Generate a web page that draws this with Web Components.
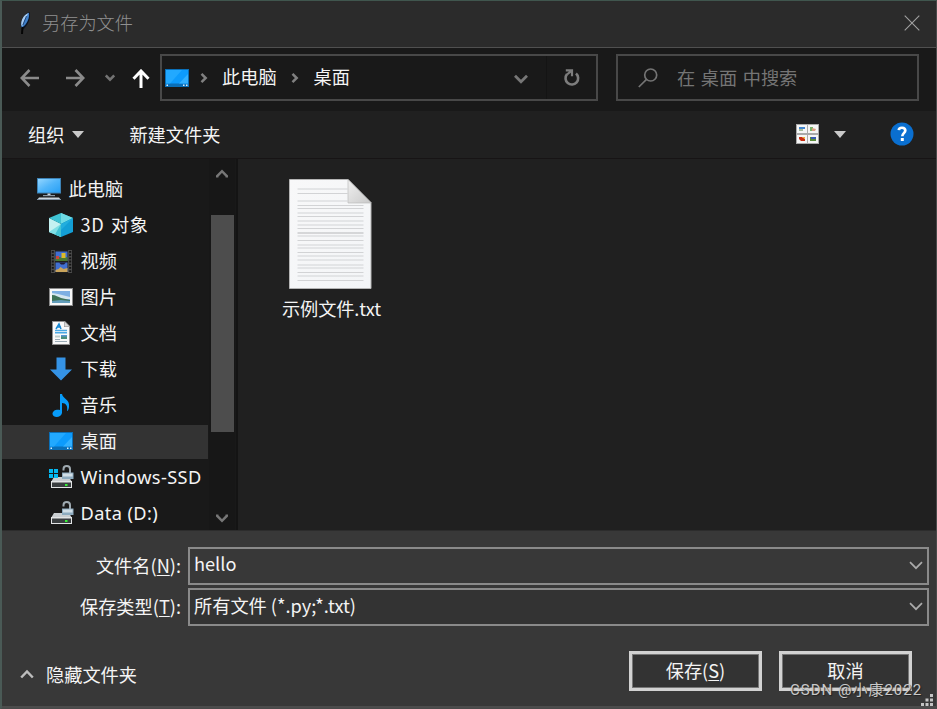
<!DOCTYPE html>
<html lang="zh-CN">
<head>
<meta charset="utf-8">
<title>另存为文件</title>
<style>
html,body{margin:0;padding:0}
body{width:937px;height:709px;overflow:hidden;background:#383838;color:#f4f4f4;font:18.2px/24px "Noto Sans CJK SC",sans-serif}
</style>
</head>
<body>
<save-dialog></save-dialog>
<script>
const DRIVE = `<path d="M14.500 5.500V4c0-4 6.500-4 6.500 0v4" fill="none" stroke="#9faab1" stroke-width="2"/><path d="M5 12h15l3 5v6H2v-6z" fill="#c9ced1"/><path d="M2 16h21v7H2z" fill="#e2e4e5"/><path d="M3 17.500h19v4.500H3z" fill="#3a3e40"/><path d="M16 19h2.500v2H16z" fill="#35ef36"/><path d="M13 7.500h11.500V14H13z" fill="#8eacc0"/><path d="M14 8.500h9.500v3H14z" fill="#d2dfe7"/>`;
const ICONS = {
feather:[14,24,`<path d="M4.300 19C1.500 13 4 4 11.500 1c1.500 5-1 13.500-7.200 18z" fill="#0b1422"/><path d="M3.500 17C2.500 10 5.500 4 11 1.800c.8 5-2 12-7.500 15.200z" fill="#3f7fc9"/><path d="M3.300 14C3 9 5.500 4 10.500 2L6.500 9 4.200 15.500z" fill="#a9cdf3"/><path d="M8.500 5L4.800 14" stroke="#12325e" stroke-width=".8"/><path d="M4.500 16L4 23" stroke="#050505" stroke-width="2"/>`],
close:[16,16,`<path d="M.7.7l14.600 14.600M15.300.7L.7 15.300" stroke="#a0a0a0" stroke-width="1.100"/>`],
back:[20,18,`<path d="M19 9H2M9.500 1L1.800 9l7.700 8" fill="none" stroke="#8b8b8b" stroke-width="2.600"/>`],
forward:[20,18,`<path d="M1 9h17M10.500 1l7.700 8-7.700 8" fill="none" stroke="#8b8b8b" stroke-width="2.600"/>`],
small:[10,8,`<path d="M.8 1.500L5 5.700l4.200-4.200" fill="none" stroke="#737373" stroke-width="2.500"/>`],
up:[18,20,`<path d="M9 19V3M1.500 9.700L9 2l7.500 7.700" fill="none" stroke="#fff" stroke-width="3"/>`],
crumb:[8,12,`<path d="M1.500 1.800L5.700 6l-4.200 4.200" fill="none" stroke="#808080" stroke-width="2.500"/>`],
chev:[14,10,`<path d="M1 1.800l6 6 6-6" fill="none" stroke="#777" stroke-width="2.800"/>`],
refresh:[17,19,`<path d="M13 5.500A6.300 6.300 0 1 1 4 6.200" fill="none" stroke="#7d7d7d" stroke-width="2.600"/><path d="M2.800 2.400H9V8.300M9 2.400L4 6.500" fill="none" stroke="#7d7d7d" stroke-width="2.200"/>`],
search:[20,20,`<circle cx="12.700" cy="7" r="6" fill="none" stroke="#747474" stroke-width="1.700"/><path d="M8.500 11.300L.8 19" stroke="#747474" stroke-width="1.700"/>`],
caret:[12,7,`<path d="M0 0h12L6 7z" fill="#c9c9c9"/>`],
views:[23,20,`<path d="M0 0h23v20H0z" fill="#aaa"/><path d="M1 1h10v8H1zM12 1h10v8H12zM1 11h10v8H1zM12 11h10v8H12z" fill="#f6f6f6"/><path d="M3 3h6v2H3z" fill="#4386cf"/><path d="M3 5h4v2H3z" fill="#a5bc9b"/><path d="M14 3h3v4h-3z" fill="#79b46a"/><path d="M16 4l4 1-1 2h-3z" fill="#db9d81"/><path d="M3 13h3l3 2v2H5l-2-2z" fill="#c92e13"/><path d="M6 13h3v2z" fill="#e7b331"/><path d="M14 13h6v4h-6z" fill="#5b8d3c"/><path d="M15 13h5v2h-5z" fill="#3a5cae"/>`],
help:[24,24,`<circle cx="12" cy="12" r="11.500" fill="#0a6fd0"/><path d="M8.800 8.200C9 4.800 15.300 4.900 15.300 8.600c0 2.400-3 2.700-3 5.600" fill="none" stroke="#fff" stroke-width="2.700"/><path d="M10.800 16h3v3h-3z" fill="#fff"/>`],
desktop:[24,18,`<path d="M0 0h24v18H0z" fill="#0a6fb8"/><path d="M1 1h22v13.500H1z" fill="#0d9bfc"/><path d="M1 1h16L5 14.500H1z" fill="#22a9ff"/><path d="M14 14.500L23 5v9.500z" fill="#32b0ff"/><path d="M1.500 15.500h1.500v1.500H1.500zM18 15.500h1.500v1.500H18zM21 15.500h1.500v1.500H21z" fill="#d7f0ff"/>`],
pc:[24,22,`<defs><linearGradient id="g" x2="1" y2="1"><stop stop-color="#92d5ff"/><stop offset=".5" stop-color="#50b5fa"/><stop offset="1" stop-color="#28a0f5"/></linearGradient></defs><path d="M0 0h24v15.500H0z" fill="#3d82b5"/><path d="M1 1h22v13.500H1z" fill="url(#g)"/><path d="M10.500 15.500h3v2h-3z" fill="#ccd5dd"/><path d="M6 17h12v1.200H6z" fill="#8998a6"/><path d="M2 19.500h20l2 2.500H0z" fill="#cbd6df"/><path d="M0 21h24v1H0z" fill="#7f91a2"/>`],
cube:[24,24,`<path d="M0 5l12 6v13L0 19z" fill="#75dce3"/><path d="M0 5l12 6-3 9-9-1z" fill="#c4f1f1"/><path d="M12 11L0 19l12 5z" fill="#7fdfe5"/><path d="M12 11v13l-6-2.500z" fill="#42c3d4"/><path d="M0 5l12-5 12 5-12 6z" fill="#3fc3d4"/><path d="M12 0l12 5-12 6z" fill="#6fdbe5"/><path d="M24 5l-12 6v13l12-5z" fill="#139fd6"/><path d="M24 5L12 17v-6z" fill="#22aede"/>`],
video:[21,23,`<path d="M0 0h21v23H0z" fill="#4a4a4a"/><path d="M1.800 1v21M19.200 1v21" stroke="#151515" stroke-width="2" stroke-dasharray="1.800 1.400"/><path d="M4 0h13v23H4z" fill="#202020"/><path d="M4.500 1.500h12V11h-12zM4.500 12.500h12V22h-12z" fill="#416fd0"/><path d="M4.500 8l4-1 3 1 5-1v4h-12z" fill="#4c7a32"/><path d="M10.500 3h4v5h-4z" fill="#dcbb29"/><path d="M5 6h3v3H5z" fill="#cb4639"/><path d="M4.500 20l3-1 2-2 3 2 4-1v4h-12z" fill="#caa45b"/><path d="M8 12.500h7l-2 2h-3z" fill="#201b38"/>`],
picture:[24,18,`<path d="M0 0h24v18H0z" fill="#8a8a8a"/><path d="M1 1h22v16H1z" fill="#f8f8f8"/><path d="M3 3h18v12H3z" fill="#7eafe3"/><path d="M3 5l6 1 8 2 4 1v2H3z" fill="#d4e5f0"/><path d="M3 7c4 0 6 2 9 3s6 1 9 2v1H3z" fill="#3e7258"/><path d="M3 13l9-1 9 1v2H3z" fill="#629dbb"/>`],
doc:[18,24,`<path d="M0 0h13l5 5v19H0z" fill="#8f8f8f"/><path d="M1 1h11v5h5v17H1z" fill="#f9f9f9"/><path d="M12.500.5V5.500H17.500z" fill="#d8d8d8"/><path d="M4 8L7 3l2 5M5 6h4" fill="none" stroke="#1687d2" stroke-width="1.500"/><path d="M3 9.500h12M3 11.700h12" stroke="#4ba8e3" stroke-width="1.500"/><path d="M3 18.500h5M3 20.500h12" stroke="#9aabb5"/><path d="M3 14.500h5v2H3z" fill="#bcc"/><path d="M9 14h6v4H9z" fill="#4c8f7b"/><path d="M9 14h6v1.500H9z" fill="#5795d4"/>`],
download:[24,24,`<path d="M7.500.5h9v12H23L12 23.500 1 12.500h6.500z" fill="#3593e6"/>`],
music:[18,25,`<path d="M8 1h2c1 5 8 5 7 13-.2 2-1 4-2 4 1-5-1-8-5-8v10c-1 5-9 5-9.500 1C.5 17 5 16 8 17z" fill="#079cfa"/>`],
windrive:[25,24,DRIVE+`<path d="M0 4h4v4H0zM5 4h4v4H5zM0 9h4v4H0zM5 9h4v4H5z" fill="#04b9f2"/>`],
drive:[25,24,DRIVE],
sup:[12,10,`<path d="M1.200 8.500V7L6 2.200 10.800 7v1.500" fill="none" stroke="#777" stroke-width="2.500"/>`],
sdown:[12,10,`<path d="M1.200 1.500V3L6 7.800 10.800 3V1.500" fill="none" stroke="#777" stroke-width="2.500"/>`],
combo:[14,9,`<path d="M1 1.200l6 6 6-6" fill="none" stroke="#aaa" stroke-width="1.700"/>`],
hide:[14,10,`<path d="M1.200 8.500l5.800-6 5.800 6" fill="none" stroke="#bdbdbd" stroke-width="2.500"/>`],
grip:[12,12,`<path d="M9 0h3v3H9zM4.500 4.500h3v3h-3zM9 4.500h3v3H9zM0 9h3v3H0zM4.500 9h3v3h-3zM9 9h3v3H9z" fill="#c4c4c4"/>`],
paper:[83,110,`<defs><linearGradient id="p" x2="1" y2="1"><stop stop-color="#f8f8f9"/><stop offset="1" stop-color="#f3f5f7"/></linearGradient><linearGradient id="f" x2="1" y2="1" ><stop offset="0" stop-color="#f0f0f0"/><stop offset="1" stop-color="#c9c9c9"/></linearGradient></defs><path d="M.5.500H59L82 23.500V109.500H.5z" fill="url(#p)" stroke="#b4b4b4"/><path d="M8.500 10h50M8.500 14.500h50M8.500 22h50M8.500 26.500h66M8.500 29.500h66M8.500 34h66M8.500 37.500h66M8.500 42h66M8.500 46h66M8.500 49.500h66M8.500 57h66M8.500 61.500h66M8.500 66h66M8.500 69h66M8.500 73.500h66M8.500 77h66M8.500 81h66M8.500 86h66M8.500 89h66M8.500 93.500h66M8.500 97h66M8.500 101.500h66" stroke="#d2d3d5" stroke-width="1.200"/><path d="M8.500 54h66" stroke="#b5b6b8"/><path d="M59 .5V24H82z" fill="url(#f)" stroke="#bcbcbc" stroke-width=".7"/>`]
};
const define = (name, css, html) => {
  const t = document.createElement('template');
  t.innerHTML = `<style>:host{box-sizing:border-box}*{box-sizing:border-box}${css}</style>${html}`;
  customElements.define(name, class extends HTMLElement {
    constructor(){ super(); this.attachShadow({mode:'open'}).append(t.content.cloneNode(true)); }
  });
};
customElements.define('ui-icon', class extends HTMLElement {
  connectedCallback(){
    if (this.shadowRoot) return;
    const [w,h,body] = ICONS[this.getAttribute('name')];
    this.attachShadow({mode:'open'}).innerHTML = `<style>:host{display:block;flex:none}svg{display:block}</style><svg width="${w}" height="${h}" viewBox="0 0 ${w} ${h}">${body}</svg>`;
  }
});
define('title-bar', `:host{display:flex;height:47px;background:#2b2b2b;border-bottom:1px solid #505050;align-items:center;padding:0 16px 0 16px;color:#909090;font-weight:300}
span{margin:-3px auto 0 10px}ui-icon{margin-top:-1px}`,
`<ui-icon name="feather"></ui-icon><span><slot></slot></span><ui-icon name="close"></ui-icon>`);
define('address-bar', `:host{display:flex;width:438px;height:47px;border:2px solid #484848;margin-left:10px;align-items:center;padding-left:3px}
.a{margin:0 14px 0 11px}.b{margin:0 15px 0 14px}.c{margin:2px 18px 0 auto}.r{display:flex;align-items:center;height:100%;width:50px;padding-left:16px;border-left:1px solid #141414}
span{margin-top:-3px}`,
`<ui-icon name="desktop"></ui-icon><ui-icon class="a" name="crumb"></ui-icon><span>此电脑</span><ui-icon class="b" name="crumb"></ui-icon><span>桌面</span><ui-icon class="c" name="chev"></ui-icon><div class="r"><ui-icon name="refresh"></ui-icon></div>`);
define('search-box', `:host{display:flex;width:303px;height:47px;border:2px solid #484848;margin-left:18px;align-items:center;padding-left:20px;color:#757575;word-spacing:1.500px}
span{margin:-1px 0 0 19px}`,
`<ui-icon name="search"></ui-icon><span><slot></slot></span>`);
define('nav-bar', `:host{display:flex;height:63px;background:#191919;padding-left:18px;align-items:center}
:host>*{flex:none}.f{margin-left:25px}.d{margin-left:20px}.u{margin:0 0 0 17px}address-bar,search-box{margin-top:-3px}ui-icon{margin-top:-2px}`,
`<ui-icon name="back"></ui-icon><ui-icon class="f" name="forward"></ui-icon><ui-icon class="d" name="small"></ui-icon><ui-icon class="u" name="up"></ui-icon><address-bar></address-bar><search-box>在 桌面 中搜索</search-box>`);
define('tool-bar', `:host{display:flex;height:48px;background:#202020;border-bottom:1px solid #171415;align-items:center;padding:0 22px 0 26px}
.n{margin:0 auto 0 45px}.c1{margin-left:8px}.c2{margin:0 44px 0 15px}`,
`<span>组织</span><ui-icon class="c1" name="caret"></ui-icon><span class="n">新建文件夹</span><ui-icon name="views"></ui-icon><ui-icon class="c2" name="caret"></ui-icon><ui-icon name="help"></ui-icon>`);
define('tree-item', `:host{display:flex;height:34px;margin-bottom:2px;align-items:center;padding-left:47px;white-space:nowrap;word-spacing:2px}
:host([root]){padding-left:35px}:host([selected]){background:#333}
.i{width:24px;display:flex;justify-content:center;margin:-1px 7.500px 0 0}span{margin-top:-3px}::slotted(i){font:18.2px "Noto Sans",sans-serif;letter-spacing:.4px;word-spacing:0}
::slotted(b){font-weight:400;letter-spacing:.6px}`,
`<div class="i"><slot name="icon"></slot></div><span><slot></slot></span>`);
define('scroll-bar', `:host{display:flex;flex-direction:column;align-items:center;width:26px;background:#171717;padding:10px 0 7px}
.t{width:23px;height:217px;background:#4d4d4d;margin:36px 0 auto}`,
`<ui-icon name="sup"></ui-icon><div class="t"></div><ui-icon name="sdown"></ui-icon>`);
define('tree-pane', `:host{display:flex;width:236px;background:#191919;border-right:2px solid #141414;overflow:hidden}
.l{width:206px;padding-top:14px;overflow:hidden}scroll-bar{margin-left:1px}`,
`<div class="l"><slot></slot></div><scroll-bar></scroll-bar>`);
define('file-tile', `:host{display:flex;flex-direction:column;align-items:center;width:110px}
span{margin:7px 0 0 3px;white-space:nowrap;letter-spacing:-.1px}`,
`<ui-icon name="paper"></ui-icon><span><slot></slot></span>`);
define('form-row', `:host{display:flex;height:38px;margin-bottom:3px;white-space:nowrap}
.l{width:179px;text-align:right;margin-right:7px;padding-top:6px}
.b{display:flex;flex:1;border:2px solid #8a8a8a;align-items:center;justify-content:space-between;padding:0 4px 0 4px;background:var(--fill,#383838)}
.b span{margin-top:-4px}`,
`<div class="l"><slot name="label"></slot></div><div class="b"><span><slot></slot></span><ui-icon name="combo"></ui-icon></div>`);
define('push-button', `:host{display:flex;width:133px;height:40px;border:3px solid #d2d2d2;background:#333;align-items:center;justify-content:center;padding-bottom:2px;box-shadow:inset 0 0 0 1px #777}`,
`<slot></slot>`);
define('dialog-footer', `:host{display:block;position:relative;height:179px;background:#383838;border-top:1px solid #2c2c2c;border-bottom:2px solid #4c4c4c;padding:16px 7px 0 0}
.a{display:flex;align-items:center;margin-top:25px;padding:0 17px 0 18px;gap:17px}
.h{display:flex;align-items:center;gap:12px;margin:7px auto 0 0}
.w{position:absolute;left:788px;top:149px;font:15px/20px Roboto,"Noto Sans CJK SC",sans-serif;color:#c9c9c9;text-shadow:1px 1px 1px #222;white-space:nowrap;letter-spacing:1px}
.g{position:absolute;right:3px;bottom:0}form-row.t{--fill:#333}u{text-underline-offset:2px;text-decoration-thickness:1px}
.hello{padding-bottom:2px;display:block}`,
`<form-row><span slot="label">文件名(<u>N</u>):</span><span class="hello">hello</span></form-row>
<form-row class="t"><span slot="label">保存类型(<u>T</u>):</span>所有文件 (*.py;*.txt)</form-row>
<div class="a"><div class="h"><ui-icon name="hide"></ui-icon><span>隐藏文件夹</span></div><push-button><span>保存(<u>S</u>)</span></push-button><push-button>取消</push-button></div>
<div class="w">CSDN @小康2022</div><ui-icon class="g" name="grip"></ui-icon>`);
define('save-dialog', `:host{display:flex;flex-direction:column;width:937px;height:709px;border:1px solid #4a4a4a;border-top-color:#40564e;border-left:2px solid #4a5a56;overflow:hidden}
.m{display:flex;height:371px}.f{flex:1;background:#202020;padding:20px 0 0 37px}`,
`<title-bar>另存为文件</title-bar><nav-bar></nav-bar><tool-bar></tool-bar>
<div class="m"><tree-pane>
<tree-item root><ui-icon slot="icon" name="pc"></ui-icon>此电脑</tree-item>
<tree-item><ui-icon slot="icon" name="cube"></ui-icon><b>3D 对象</b></tree-item>
<tree-item><ui-icon slot="icon" name="video"></ui-icon>视频</tree-item>
<tree-item><ui-icon slot="icon" name="picture"></ui-icon>图片</tree-item>
<tree-item><ui-icon slot="icon" name="doc"></ui-icon>文档</tree-item>
<tree-item><ui-icon slot="icon" name="download"></ui-icon>下载</tree-item>
<tree-item><ui-icon slot="icon" name="music"></ui-icon>音乐</tree-item>
<tree-item selected><ui-icon slot="icon" name="desktop"></ui-icon>桌面</tree-item>
<tree-item><ui-icon slot="icon" name="windrive"></ui-icon><i>Windows-SSD</i></tree-item>
<tree-item><ui-icon slot="icon" name="drive"></ui-icon><i>Data (D:)</i></tree-item>
</tree-pane><div class="f"><file-tile>示例文件.txt</file-tile></div></div>
<dialog-footer></dialog-footer>`);
</script>
</body>
</html>
